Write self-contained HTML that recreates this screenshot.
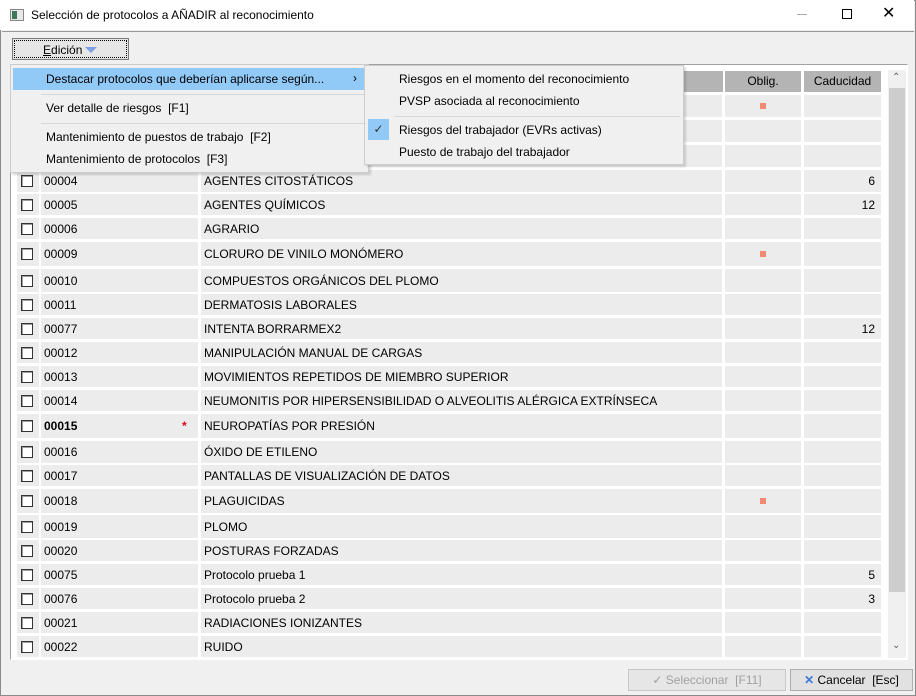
<!DOCTYPE html>
<html><head><meta charset="utf-8"><style>
*{margin:0;padding:0;box-sizing:border-box}
body{width:916px;height:696px;background:#f0f0f0;font-family:"Liberation Sans",sans-serif;font-size:12px;color:#000;position:relative;overflow:hidden}
.abs{position:absolute}
#win{position:absolute;left:0;top:0;width:916px;height:696px;border:1px solid #8a8a8a}
#title{position:absolute;left:0;top:0;width:914px;height:30px;background:#fff}
.r{position:absolute;left:15px;width:868px}
.c{position:absolute;top:0;bottom:0;background:#ececec;line-height:1}
.cb{left:2px;width:22px}
.cb i{position:absolute;left:4px;top:50%;margin-top:-6px;width:12px;height:12px;border:1px solid #333;background:#fff;box-shadow:inset 1px 1px 0 #a0a0a0}
.cd{left:26px;width:157px;padding-left:3px;display:flex;align-items:center}
.ds{left:186px;width:521px;padding-left:3px;display:flex;align-items:center}
.ob{left:710px;width:76px}
.ob b{position:absolute;left:35px;top:50%;margin-top:-3px;width:6px;height:6px;background:#f08a70}
.ca{left:789px;width:77px;display:flex;align-items:center;justify-content:flex-end;padding-right:6px}
.mi{position:absolute;left:35px;font-size:12px}
.si{position:absolute;left:34px;font-size:12px}
</style></head><body>
<div id="win"></div>
<div id="title">
 <div class="abs" style="left:10px;top:9px;width:14px;height:12px;border:1px solid #888;background:#e8e8e8"><div class="abs" style="left:1px;top:1px;width:5px;height:8px;background:#3a7a5a"></div></div>
 <div class="abs" style="left:31px;top:8px;font-size:12px">Selección de protocolos a AÑADIR al reconocimiento</div>
 <div class="abs" style="left:797px;top:14px;width:10px;height:1px;background:#aaa"></div>
 <div class="abs" style="left:842px;top:9px;width:10px;height:10px;border:1px solid #000"></div>
 <div class="abs" style="left:882px;top:4px;font-size:16px;line-height:20px">✕</div>
</div>
<div class="abs" style="left:2px;top:31px;width:912px;height:1px;background:#999"></div>
<!-- Edicion button -->
<div class="abs" style="left:12px;top:38px;width:117px;height:22px;border:1px solid #7a7a7a;background:#e6e6e6"><div class="abs" style="left:1px;top:1px;right:1px;bottom:1px;border:1px dotted #000"></div>
<div class="abs" style="left:30px;top:4px"><u>E</u>dición</div>
<div class="abs" style="left:72px;top:8px;width:0;height:0;border-left:6px solid transparent;border-right:6px solid transparent;border-top:6px solid #7ca0e0"></div></div>
<!-- grid frame -->
<div class="abs" style="left:10px;top:64px;width:898px;height:596px;border:1px solid #a0a0a0;border-right-color:#fff;border-bottom-color:#fff;background:#fff"></div>
<div class="abs" style="left:15px;top:70px;width:868px;height:22px;background:#fff"></div>
<div class="abs" style="left:725px;top:71px;width:76px;height:21px;background:#b4b4b4;text-align:center;line-height:21px">Oblig.</div>
<div class="abs" style="left:804px;top:71px;width:77px;height:21px;background:#b4b4b4;text-align:center;line-height:21px">Caducidad</div>
<div class="abs" style="left:15px;top:71px;width:708px;height:21px;background:#b4b4b4"></div>
<!-- scrollbar -->
<div class="abs" style="left:888px;top:70px;width:18px;height:588px;background:#f0f0f0"></div>
<div class="abs" style="left:889px;top:88px;width:16px;height:504px;background:#cdcdcd"></div>
<div class="abs" style="left:892px;top:72px;font-size:10px;color:#606060">&#8963;</div>
<div class="abs" style="left:892px;top:640px;font-size:10px;color:#606060">&#8964;</div>

<div class="r" style="top:95px;height:22px"><div class="c cb"></div><div class="c cd"></div><div class="c ds"></div><div class="c ob"><b></b></div><div class="c ca"></div></div>
<div class="r" style="top:120px;height:22px"><div class="c cb"></div><div class="c cd"></div><div class="c ds"></div><div class="c ob"></div><div class="c ca"></div></div>
<div class="r" style="top:145px;height:22px"><div class="c cb"></div><div class="c cd"></div><div class="c ds"></div><div class="c ob"></div><div class="c ca"></div></div>
<div class="r" style="top:170px;height:22px"><div class="c cb"><i></i></div><div class="c cd">00004</div><div class="c ds">AGENTES CITOSTÁTICOS</div><div class="c ob"></div><div class="c ca">6</div></div>
<div class="r" style="top:194px;height:21px"><div class="c cb"><i></i></div><div class="c cd">00005</div><div class="c ds">AGENTES QUÍMICOS</div><div class="c ob"></div><div class="c ca">12</div></div>
<div class="r" style="top:218px;height:21px"><div class="c cb"><i></i></div><div class="c cd">00006</div><div class="c ds">AGRARIO</div><div class="c ob"></div><div class="c ca"></div></div>
<div class="r" style="top:242px;height:24px"><div class="c cb"><i></i></div><div class="c cd">00009</div><div class="c ds">CLORURO DE VINILO MONÓMERO</div><div class="c ob"><b></b></div><div class="c ca"></div></div>
<div class="r" style="top:269px;height:23px"><div class="c cb"><i></i></div><div class="c cd">00010</div><div class="c ds">COMPUESTOS ORGÁNICOS DEL PLOMO</div><div class="c ob"></div><div class="c ca"></div></div>
<div class="r" style="top:294px;height:21px"><div class="c cb"><i></i></div><div class="c cd">00011</div><div class="c ds">DERMATOSIS LABORALES</div><div class="c ob"></div><div class="c ca"></div></div>
<div class="r" style="top:318px;height:21px"><div class="c cb"><i></i></div><div class="c cd">00077</div><div class="c ds">INTENTA BORRARMEX2</div><div class="c ob"></div><div class="c ca">12</div></div>
<div class="r" style="top:342px;height:21px"><div class="c cb"><i></i></div><div class="c cd">00012</div><div class="c ds">MANIPULACIÓN MANUAL DE CARGAS</div><div class="c ob"></div><div class="c ca"></div></div>
<div class="r" style="top:366px;height:21px"><div class="c cb"><i></i></div><div class="c cd">00013</div><div class="c ds">MOVIMIENTOS REPETIDOS DE MIEMBRO SUPERIOR</div><div class="c ob"></div><div class="c ca"></div></div>
<div class="r" style="top:390px;height:21px"><div class="c cb"><i></i></div><div class="c cd">00014</div><div class="c ds">NEUMONITIS POR HIPERSENSIBILIDAD O ALVEOLITIS ALÉRGICA EXTRÍNSECA</div><div class="c ob"></div><div class="c ca"></div></div>
<div class="r" style="top:414px;height:24px"><div class="c cb"><i></i></div><div class="c cd" style="font-weight:bold">00015<span style="position:absolute;left:141px;color:#e00010;font-weight:bold">*</span></div><div class="c ds">NEUROPATÍAS POR PRESIÓN</div><div class="c ob"></div><div class="c ca"></div></div>
<div class="r" style="top:441px;height:22px"><div class="c cb"><i></i></div><div class="c cd">00016</div><div class="c ds">ÓXIDO DE ETILENO</div><div class="c ob"></div><div class="c ca"></div></div>
<div class="r" style="top:465px;height:21px"><div class="c cb"><i></i></div><div class="c cd">00017</div><div class="c ds">PANTALLAS DE VISUALIZACIÓN DE DATOS</div><div class="c ob"></div><div class="c ca"></div></div>
<div class="r" style="top:489px;height:24px"><div class="c cb"><i></i></div><div class="c cd">00018</div><div class="c ds">PLAGUICIDAS</div><div class="c ob"><b></b></div><div class="c ca"></div></div>
<div class="r" style="top:515px;height:23px"><div class="c cb"><i></i></div><div class="c cd">00019</div><div class="c ds">PLOMO</div><div class="c ob"></div><div class="c ca"></div></div>
<div class="r" style="top:540px;height:21px"><div class="c cb"><i></i></div><div class="c cd">00020</div><div class="c ds">POSTURAS FORZADAS</div><div class="c ob"></div><div class="c ca"></div></div>
<div class="r" style="top:564px;height:21px"><div class="c cb"><i></i></div><div class="c cd">00075</div><div class="c ds">Protocolo prueba 1</div><div class="c ob"></div><div class="c ca">5</div></div>
<div class="r" style="top:588px;height:21px"><div class="c cb"><i></i></div><div class="c cd">00076</div><div class="c ds">Protocolo prueba 2</div><div class="c ob"></div><div class="c ca">3</div></div>
<div class="r" style="top:612px;height:21px"><div class="c cb"><i></i></div><div class="c cd">00021</div><div class="c ds">RADIACIONES IONIZANTES</div><div class="c ob"></div><div class="c ca"></div></div>
<div class="r" style="top:636px;height:21px"><div class="c cb"><i></i></div><div class="c cd">00022</div><div class="c ds">RUIDO</div><div class="c ob"></div><div class="c ca"></div></div>

<!-- menu -->
<div class="abs" style="left:10px;top:64px;width:359px;height:109px;background:#f0f0f0;border:1px solid #ccc;box-shadow:2px 2px 2px rgba(0,0,0,.15)">
 <div class="abs" style="left:2px;top:3px;width:352px;height:22px;background:#91c9f7"></div>
 <div class="mi" style="top:7px">Destacar protocolos que deberían aplicarse según...</div>
 <div class="abs" style="left:342px;top:6px">›</div>
 <div class="abs" style="left:30px;top:29px;width:325px;height:1px;background:#d7d7d7"></div>
 <div class="mi" style="top:36px">Ver detalle de riesgos&nbsp; [F1]</div>
 <div class="abs" style="left:30px;top:58px;width:325px;height:1px;background:#d7d7d7"></div>
 <div class="mi" style="top:65px">Mantenimiento de puestos de trabajo&nbsp; [F2]</div>
 <div class="mi" style="top:87px">Mantenimiento de protocolos&nbsp; [F3]</div>
</div>
<div class="abs" style="left:364px;top:65px;width:320px;height:100px;background:#f0f0f0;border:1px solid #ccc;box-shadow:2px 2px 2px rgba(0,0,0,.15)">
 <div class="si" style="top:6px">Riesgos en el momento del reconocimiento</div>
 <div class="si" style="top:28px">PVSP asociada al reconocimiento</div>
 <div class="abs" style="left:29px;top:50px;width:286px;height:1px;background:#d7d7d7"></div>
 <div class="abs" style="left:3px;top:53px;width:21px;height:21px;background:#91c9f7;text-align:center;line-height:21px;font-size:12px;color:#333">✓</div>
 <div class="si" style="top:57px">Riesgos del trabajador (EVRs activas)</div>
 <div class="si" style="top:79px">Puesto de trabajo del trabajador</div>
</div>

<!-- buttons -->
<div class="abs" style="left:628px;top:669px;width:158px;height:22px;border:1px solid #c8c8c8;background:#e6e6e6;color:#a0a0a0;text-align:center;line-height:20px">✓ Seleccionar&nbsp; [F11]</div>
<div class="abs" style="left:790px;top:669px;width:123px;height:22px;border:1px solid #adadad;background:#e1e1e1;text-align:center;line-height:20px"><span style="color:#3a7ad8;font-weight:bold">✕</span> Cancelar&nbsp; [Esc]</div>
</body></html>
